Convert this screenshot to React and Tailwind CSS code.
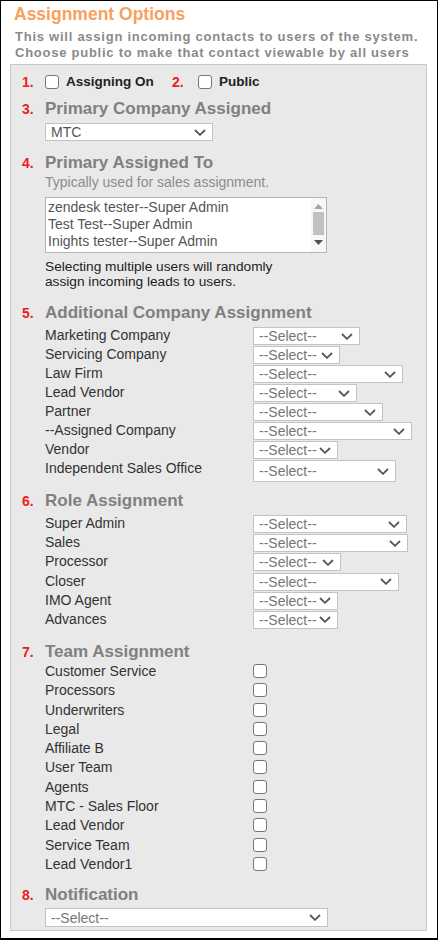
import React from 'react';

const companyRows = [
  { label: 'Marketing Company', w: 'w-[107px]' },
  { label: 'Servicing Company', w: 'w-[87px]' },
  { label: 'Law Firm', w: 'w-[150px]' },
  { label: 'Lead Vendor', w: 'w-[104px]' },
  { label: 'Partner', w: 'w-[130px]' },
  { label: '--Assigned Company', w: 'w-[159px]' },
  { label: 'Vendor', w: 'w-[85px]' },
  { label: 'Independent Sales Office', w: 'w-[143px]', tall: true },
];

const roleRows = [
  { label: 'Super Admin', w: 'w-[154px]' },
  { label: 'Sales', w: 'w-[155px]' },
  { label: 'Processor', w: 'w-[88px]' },
  { label: 'Closer', w: 'w-[146px]' },
  { label: 'IMO Agent', w: 'w-[85px]' },
  { label: 'Advances', w: 'w-[85px]' },
];

const teams = [
  'Customer Service',
  'Processors',
  'Underwriters',
  'Legal',
  'Affiliate B',
  'User Team',
  'Agents',
  'MTC - Sales Floor',
  'Lead Vendor',
  'Service Team',
  'Lead Vendor1',
];

const users = ['zendesk tester--Super Admin', 'Test Test--Super Admin', 'Inights tester--Super Admin'];

const Chevron = () => (
  <svg width="12" height="7" viewBox="0 0 12 7" className="shrink-0">
    <path d="M1 1l5 4.8L11 1" fill="none" stroke="#555" strokeWidth="1.8" />
  </svg>
);

const FakeSelect = ({ w, text = '--Select--', h = 'h-[18px]', color = 'text-[#757575]' }) => (
  <div
    className={`${w} ${h} flex items-center justify-between bg-white border border-[#c3c3c3] pl-[5px] pr-[6px] text-[14px] leading-none ${color}`}
  >
    <span>{text}</span>
    <Chevron />
  </div>
);

const Box = () => (
  <span className="block w-[14px] h-[14px] shrink-0 rounded-[3px] border border-[#767676] bg-white"></span>
);

const Heading = ({ n, children }) => (
  <div className="flex items-baseline h-[20px] leading-[20px]">
    <span className="w-[23px] text-[14px] font-bold text-[#ee1c25]">{n}.</span>
    <span className="text-[17px] font-bold text-[#808080]">{children}</span>
  </div>
);

export default function App() {
  return (
    <div className="w-[438px] h-[940px] bg-white border border-black border-b-2 font-['Liberation_Sans',Arial,sans-serif] pt-[3px]">
      <div className="pl-[13px] text-[17.5px] leading-[20px] font-bold text-[#f9a05e]">Assignment Options</div>
      <div className="pl-[14px] mt-[5px] text-[13px] leading-[16px] font-bold tracking-[0.75px] text-[#8a8a8a]">
        <div>This will assign incoming contacts to users of the system.</div>
        <div>Choose public to make that contact viewable by all users</div>
      </div>

      <div className="ml-[9px] mt-[3px] w-[417px] h-[867px] bg-[#e9e9e9] border border-[#c8c8c8] pl-[11px] pt-[7px]">
        {/* 1 & 2 */}
        <div className="flex items-center h-[20px]">
          <span className="w-[23px] text-[14px] font-bold text-[#ee1c25]">1.</span>
          <div className="flex items-center w-[127px]">
            <Box />
            <span className="ml-[7px] text-[13.5px] font-bold text-[#222]">Assigning On</span>
          </div>
          <span className="w-[26px] text-[14px] font-bold text-[#ee1c25]">2.</span>
          <Box />
          <span className="ml-[7px] text-[13.5px] font-bold text-[#222]">Public</span>
        </div>

        {/* 3 */}
        <div className="mt-[7px]">
          <Heading n={3}>Primary Company Assigned</Heading>
          <div className="pl-[23px] mt-[4px]">
            <FakeSelect w="w-[168px]" text="MTC" color="text-[#555]" />
          </div>
        </div>

        {/* 4 */}
        <div className="mt-[12px]">
          <Heading n={4}>Primary Assigned To</Heading>
          <div className="pl-[23px]">
            <div className="mt-[1px] text-[14px] leading-[16px] text-[#8c8c8c]">Typically used for sales assignment.</div>
            <div className="mt-[7px] flex w-[282px] h-[56px] bg-white border border-[#b5b5b5]">
              <div className="flex-1 pl-[2px] pt-[1px] text-[14px] leading-[17px] text-[#555]">
                {users.map((u) => (
                  <div key={u}>{u}</div>
                ))}
              </div>
              <div className="w-[15px] flex flex-col items-center bg-[#f7f7f7]">
                <svg width="9" height="5" viewBox="0 0 9 5" className="mt-[6px]">
                  <path d="M0 5L4.5 0L9 5Z" fill="#a3a3a3" />
                </svg>
                <div className="mt-[3px] w-[11px] h-[23px] bg-[#c1c1c1]"></div>
                <svg width="9" height="5" viewBox="0 0 9 5" className="mt-[5px]">
                  <path d="M0 0L4.5 5L9 0Z" fill="#505050" />
                </svg>
              </div>
            </div>
            <div className="mt-[6px] text-[13.7px] leading-[15px] text-[#222]">
              <div>Selecting multiple users will randomly</div>
              <div>assign incoming leads to users.</div>
            </div>
          </div>
        </div>

        {/* 5 */}
        <div className="mt-[14px]">
          <Heading n={5}>Additional Company Assignment</Heading>
          <div className="pl-[23px] mt-[4px]">
            {companyRows.map((r) => (
              <div key={r.label} className="flex items-start mb-[1px]">
                <span className="w-[208px] text-[14px] leading-[16px] text-[#333]">{r.label}</span>
                <FakeSelect w={r.w} h={r.tall ? 'h-[22px]' : 'h-[18px]'} />
              </div>
            ))}
          </div>
        </div>

        {/* 6 */}
        <div className="mt-[9px]">
          <Heading n={6}>Role Assignment</Heading>
          <div className="pl-[23px] mt-[4px]">
            {roleRows.map((r) => (
              <div key={r.label} className="flex items-start mb-[1.2px]">
                <span className="w-[208px] text-[14px] leading-[16px] text-[#333]">{r.label}</span>
                <FakeSelect w={r.w} />
              </div>
            ))}
          </div>
        </div>

        {/* 7 */}
        <div className="mt-[13px]">
          <Heading n={7}>Team Assignment</Heading>
          <div className="pl-[23px] mt-[1px]">
            {teams.map((t) => (
              <div key={t} className="flex items-start h-[19.3px]">
                <span className="w-[208px] text-[14px] leading-[16px] text-[#333]">{t}</span>
                <span className="mt-[1px]">
                  <Box />
                </span>
              </div>
            ))}
          </div>
        </div>

        {/* 8 */}
        <div className="mt-[10px]">
          <Heading n={8}>Notification</Heading>
          <div className="pl-[23px] mt-[3px]">
            <FakeSelect w="w-[283px]" h="h-[19px]" />
          </div>
        </div>
      </div>
    </div>
  );
}
